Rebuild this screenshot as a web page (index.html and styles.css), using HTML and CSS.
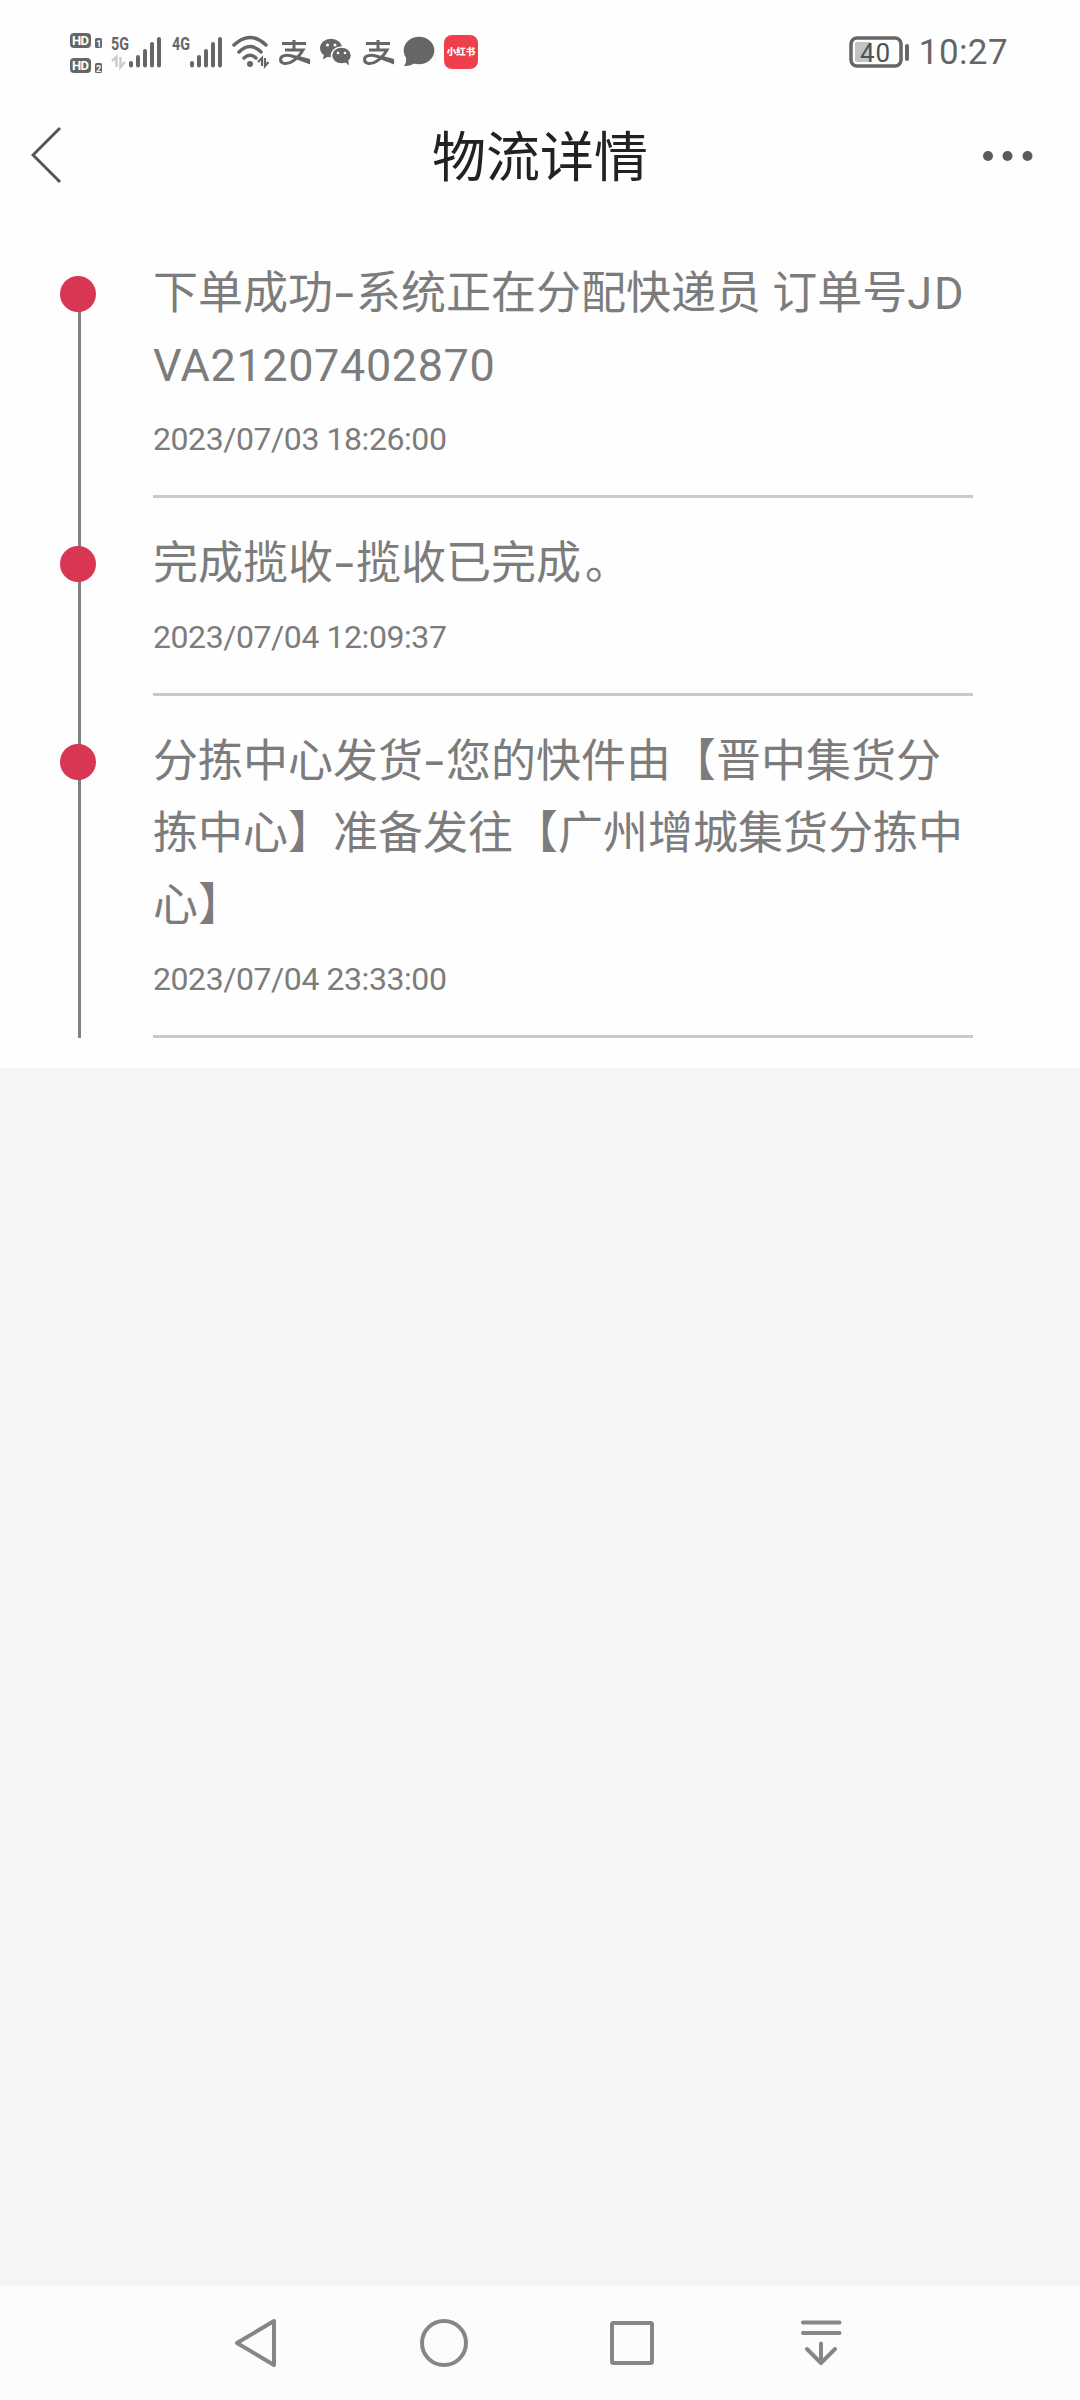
FILE: index.html
```
<!DOCTYPE html>
<html lang="zh-CN">
<head>
    <meta charset="UTF-8">
    <meta name="viewport" content="width=device-width, initial-scale=1.0">
    <title>物流详情</title>
    <link rel="stylesheet" href="styles.css">
</head>
<body>
    <div class="page">
        <!-- Status bar -->
        <div class="status-bar">
            <div class="status-left">
                <svg class="hd" width="34" height="44" viewBox="0 0 34 44">
                    <rect x="0" y="3" width="21" height="15" rx="4"/>
                    <rect x="25" y="8" width="7" height="10" rx="1.5"/>
                    <rect x="0" y="28" width="21" height="15" rx="4"/>
                    <rect x="25" y="33" width="7" height="10" rx="1.5"/>
                    <g class="knock">
                        <text x="2" y="15.3" font-size="13" textLength="17">HD</text>
                        <text x="26.2" y="16.5" font-size="9">1</text>
                        <text x="2" y="40.3" font-size="13" textLength="17">HD</text>
                        <text x="26" y="41.5" font-size="9">2</text>
                    </g>
                </svg>
                <svg class="signal" width="51" height="44" viewBox="0 0 51 44">
                    <text x="-1" y="20" font-size="18.500" textLength="18" lengthAdjust="spacingAndGlyphs">5G</text>
                    <path class="faint" d="M0 31 4.500 27V37M8.500 27V37L13 32"/>
                    <path class="bars" d="M19 33v2.5M26 27v8.500M33 21v14.500M40 14v21.500M47 9v26.500"/>
                </svg>
                <svg class="signal second" width="51" height="44" viewBox="0 0 51 44">
                    <text x="-1" y="20" font-size="18.500" textLength="18" lengthAdjust="spacingAndGlyphs">4G</text>
                    <path class="bars" d="M19 33v2.5M26 27v8.500M33 21v14.500M40 14v21.500M47 9v26.500"/>
                </svg>
                <svg class="wifi" width="38" height="44" viewBox="0 0 38 44">
                    <path class="arc" d="M2 15Q18 0 34 15M7 22Q18 11 29 22M12 28Q18 22.500 24 28"/>
                    <circle cx="18" cy="34" r="3"/>
                    <path class="arrows" d="M26 32 30 28V36M33 28V36L36.500 32"/>
                </svg>
                <svg class="pay" width="32" height="44" viewBox="0 0 32 44">
                    <path d="M3 13.500H27M15 10V20M6 20H24Q20 27 14 31C8 35 1.500 34 1.500 29.500C1.500 25 9 24 16 27Q23 30 31 32.500"/>
                    <path d="M18 25.500 31 29V34.500L15 27z" class="tail"/>
                </svg>
                <svg class="wechat" width="32" height="44" viewBox="0 0 32 44">
                    <ellipse cx="11" cy="18" rx="11" ry="9.300"/>
                    <path d="M4 24 3 29.500 9 26z"/>
                    <ellipse class="edge" cx="21.500" cy="25.500" rx="10" ry="8.500"/>
                    <path d="M25 32 29 35.500 28 29z"/>
                    <g class="eyes"><circle cx="7.500" cy="15" r="1.500"/><circle cx="15" cy="15" r="1.500"/><circle cx="18" cy="23" r="1.300"/><circle cx="25" cy="23" r="1.300"/></g>
                </svg>
                <svg class="pay" width="32" height="44" viewBox="0 0 32 44">
                    <path d="M3 13.500H27M15 10V20M6 20H24Q20 27 14 31C8 35 1.500 34 1.500 29.500C1.500 25 9 24 16 27Q23 30 31 32.500"/>
                    <path d="M18 25.500 31 29V34.500L15 27z" class="tail"/>
                </svg>
                <svg class="bubble" width="32" height="44" viewBox="0 0 32 44">
                    <ellipse cx="16" cy="20.500" rx="15.300" ry="13.700"/>
                    <path d="M3 27Q4 32 1 36Q8 36.500 13 32z"/>
                </svg>
                <span class="red-app">小红书</span>
            </div>
            <div class="status-right">
                <svg class="battery" width="61" height="34" viewBox="0 0 61 34">
                    <rect class="level" x="6" y="7" width="16" height="20" rx="2"/>
                    <rect class="shell" x="2" y="3" width="50" height="28" rx="6"/>
                    <rect x="56" y="9" width="4" height="17" rx="2"/>
                    <text x="11" y="26.500" font-size="26" textLength="30">40</text>
                </svg>
                <span class="clock">10:27</span>
            </div>
        </div>

        <!-- Title bar -->
        <div class="header">
            <svg width="32" height="60" viewBox="0 0 32 60">
                <path d="M29 2 2 29 29 56" fill="none" stroke="#555" stroke-width="3"/>
            </svg>
            <h1>物流详情</h1>
            <svg width="50" height="12" viewBox="0 0 50 12" fill="#5b5c54">
                <circle cx="5" cy="6" r="5"/>
                <circle cx="24.500" cy="6" r="5"/>
                <circle cx="44.500" cy="6" r="5"/>
            </svg>
        </div>

        <!-- Tracking records -->
        <div class="timeline">
            <div class="record">
                <div class="track"><span class="dot"></span></div>
                <div class="info">
                    <p>下单成功<span class="dash">-</span>系统正在分配快递员 订单号<span class="code wide">JD</span><br><span class="code">VA21207402870</span></p>
                    <time>2023/07/03 18:26:00</time>
                </div>
            </div>
            <div class="record">
                <div class="track"><span class="dot"></span></div>
                <div class="info">
                    <p>完成揽收<span class="dash">-</span>揽收已完成<span class="stop">。</span></p>
                    <time>2023/07/04 12:09:37</time>
                </div>
            </div>
            <div class="record">
                <div class="track"><span class="dot"></span></div>
                <div class="info">
                    <p>分拣中心发货<span class="dash">-</span>您的快件由【晋中集货分<br>拣中心】准备发往【广州增城集货分拣中<br>心】</p>
                    <time>2023/07/04 23:33:00</time>
                </div>
            </div>
        </div>

        <!-- System navigation -->
        <div class="nav-bar">
            <svg width="48" height="48" viewBox="0 0 48 48"><path d="M43 2 6 24 43 46z"/></svg>
            <svg width="48" height="48" viewBox="0 0 48 48"><circle cx="24" cy="24" r="22"/></svg>
            <svg width="48" height="48" viewBox="0 0 48 48"><rect x="4" y="4" width="40" height="40" rx="1.500"/></svg>
            <svg width="48" height="48" viewBox="0 0 48 48"><path d="M6 3.500H42.500M6 14H42.500M24 24.500V44M10 30 24 44 38 30"/></svg>
        </div>
    </div>
</body>
</html>
```

FILE: styles.css
```
* {
    box-sizing: border-box;
}
body {
    margin: 0;
    font-family: Roboto, "Noto Sans CJK SC", sans-serif;
    background-color: #f5f5f5;
    color: #7c7c7c;
    text-spacing-trim: space-all;
}
.page {
    width: 1080px;
    height: 2400px;
    display: flex;
    flex-direction: column;
}
svg {
    display: block;
    flex: none;
}

/* Status bar */
.status-bar {
    height: 108px;
    padding: 30px 72px 0 70px;
    display: flex;
    justify-content: space-between;
    align-items: flex-start;
    background: #fefefe;
    color: #666;
}
.status-left {
    display: flex;
    height: 44px;
}
.status-left svg,
.battery {
    fill: #666;
}
.status-left svg {
    overflow: visible;
}
.status-left text {
    font-weight: 700;
}
.status-left .knock {
    fill: #fff;
}
.signal {
    margin-left: 8px;
}
.signal.second {
    margin-left: 10px;
}
.bars {
    stroke: #666;
    stroke-width: 4;
    stroke-linecap: round;
}
.faint {
    fill: none;
    stroke: #ccc;
    stroke-width: 2.5;
}
.wifi {
    margin-left: 8px;
}
.arc {
    fill: none;
    stroke: #666;
    stroke-width: 3.5;
    stroke-linecap: round;
}
.arrows {
    fill: none;
    stroke: #666;
    stroke-width: 2.2;
}
.pay {
    margin-left: 9px;
}
.pay path {
    fill: none;
    stroke: #666;
    stroke-width: 3;
}
.pay .tail {
    fill: #666;
    stroke: none;
}
.wechat {
    margin-left: 9px;
}
.wechat + .pay {
    margin-left: 11px;
}
.edge {
    stroke: #fefefe;
    stroke-width: 1.5;
}
.eyes {
    fill: #fff;
}
.bubble {
    margin-left: 8px;
}
.red-app {
    width: 34px;
    height: 34px;
    margin: 5px 0 0 9px;
    border-radius: 8px;
    background: #ee3f4b;
    color: #fff;
    font-size: 9.5px;
    font-weight: 900;
    line-height: 33px;
    text-align: center;
    white-space: nowrap;
}
.status-right {
    display: flex;
    padding-top: 5px;
}
.shell {
    fill: none;
    stroke: #666;
    stroke-width: 3.5;
}
.level {
    fill: #c4c4c4;
}
.battery text {
    fill: #505050;
}
.clock {
    margin-left: 9px;
    font-size: 35px;
    line-height: 36px;
    letter-spacing: 0.4px;
}

/* Title bar */
.header {
    height: 120px;
    padding: 0 47px 24px 31px;
    display: flex;
    align-items: center;
    background: #fefefe;
}
.header h1 {
    flex: 1;
    margin: 0;
    padding: 5px 0 0 34px;
    font-size: 54px;
    font-weight: 400;
    line-height: 80px;
    text-align: center;
    color: #222;
}

/* Tracking records */
.timeline {
    padding: 0 107px 30px 60px;
    background: #fefefe;
}
.record {
    display: flex;
}
.track {
    width: 93px;
    padding-top: 48px;
    background: linear-gradient(#808080, #808080) 18px 0 / 3px 100% no-repeat;
}
.record:first-child .track {
    background-position: 18px 66px;
}
.dot {
    display: block;
    width: 36px;
    height: 36px;
    border-radius: 50%;
    background: #d93654;
}
.info {
    flex: 1;
    padding: 30px 0 32px;
    border-bottom: 3px solid #cacaca;
    white-space: nowrap;
}
.info p {
    margin: 0 0 13px;
    font-size: 45px;
    line-height: 72px;
}
.info time {
    display: block;
    font-size: 32px;
    line-height: 48px;
    letter-spacing: -0.43px;
}
.dash {
    display: inline-block;
    width: 23px;
    font-family: Inter, sans-serif;
    line-height: 1;
    text-align: center;
    transform: scaleX(1.15);
}
.code {
    letter-spacing: 0.6px;
}
.code.wide {
    letter-spacing: 2px;
}
.stop {
    margin-left: 4px;
}

/* System navigation */
.nav-bar {
    height: 114px;
    margin-top: auto;
    padding-left: 231px;
    display: flex;
    align-items: center;
    gap: 140.5px;
    background: #fcfcfc;
}
.nav-bar svg {
    fill: none;
    stroke: #868686;
    stroke-width: 4;
    stroke-linecap: round;
    stroke-linejoin: round;
}
```
